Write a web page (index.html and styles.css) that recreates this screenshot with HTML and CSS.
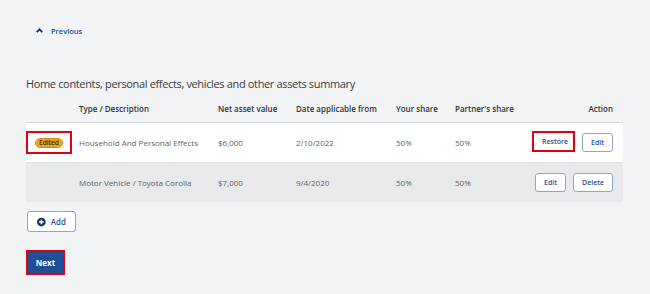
FILE: index.html
```html
<!DOCTYPE html>
<html lang="en">
<head>
    <meta charset="UTF-8">
    <meta name="viewport" content="width=device-width, initial-scale=1.0">
    <title>Assets Summary</title>
    <link rel="stylesheet" href="styles.css">
</head>
<body>

<div class="page">
    <a class="previous-link" href="#">
        <svg class="chevron" width="7" height="5" viewBox="0 0 7 5"><path d="M0.8 4.2 L3.5 1.4 L6.2 4.2" fill="none" stroke="#17365f" stroke-width="1.8"/></svg>
        Previous
    </a>

    <h2 class="summary-title">Home contents, personal effects, vehicles and other assets summary</h2>

    <table class="assets-table">
        <thead>
            <tr>
                <th class="col-flag"></th>
                <th class="col-type">Type / Description</th>
                <th class="col-value">Net asset value</th>
                <th class="col-date">Date applicable from</th>
                <th class="col-share">Your share</th>
                <th class="col-partner">Partner's share</th>
                <th class="col-action">Action</th>
            </tr>
        </thead>
        <tbody>
            <tr class="row-edited">
                <td class="col-flag"><span class="flag-box"><span class="badge">Edited</span></span></td>
                <td>Household And Personal Effects</td>
                <td>$6,000</td>
                <td>2/10/2022</td>
                <td>50%</td>
                <td>50%</td>
                <td class="col-action">
                    <div class="actions">
                        <button class="btn btn-highlight">Restore</button>
                        <button class="btn">Edit</button>
                    </div>
                </td>
            </tr>
            <tr class="row-plain">
                <td class="col-flag"></td>
                <td>Motor Vehicle / Toyota Corolla</td>
                <td>$7,000</td>
                <td>9/4/2020</td>
                <td>50%</td>
                <td>50%</td>
                <td class="col-action">
                    <div class="actions">
                        <button class="btn">Edit</button>
                        <button class="btn">Delete</button>
                    </div>
                </td>
            </tr>
        </tbody>
    </table>

    <button class="btn add-btn">
        <svg width="10" height="10" viewBox="0 0 10 10"><circle cx="5" cy="5" r="5" fill="#17365f"/><path d="M5 2.4 V7.6 M2.4 5 H7.6" stroke="#fff" stroke-width="1.6"/></svg>
        Add
    </button>

    <div class="next-row">
        <button class="next-btn">Next</button>
    </div>
</div>

</body>
</html>
```

FILE: styles.css
```css
body {
    margin: 0;
    background-color: #f2f3f5;
    font-family: "Open Sans", Arial, sans-serif;
    color: #4a4a4a;
}

.page {
    padding: 16px 27px 0 26px;
}

.previous-link {
    display: inline-flex;
    align-items: center;
    gap: 8px;
    margin-left: 10px;
    font-size: 7.5px;
    font-weight: 600;
    color: #2a4f8f;
    text-decoration: none;
}

.summary-title {
    margin: 38px 0 0 0;
    font-size: 11px;
    font-weight: 400;
    letter-spacing: -0.35px;
    color: #3c3c3c;
}

.assets-table {
    width: 597px;
    margin-top: 4px;
    border-collapse: collapse;
    table-layout: fixed;
    font-size: 8px;
}

.assets-table th {
    height: 27px;
    text-align: left;
    font-weight: 600;
    color: #333;
    padding: 0;
    border-bottom: 1px solid #d9dadd;
}

.assets-table td {
    height: 39px;
    padding: 0;
    color: #5f5f5f;
    border-bottom: 1px solid #e0e1e4;
}

.col-flag { width: 53px; }
.col-type { width: 139px; }
.col-value { width: 78px; }
.col-date { width: 100px; }
.col-share { width: 59px; }
.col-partner { width: 73px; }

.assets-table .col-action {
    text-align: right;
    padding-right: 10px;
}

.row-edited {
    background-color: #fff;
}

.row-plain {
    background-color: #e8e9eb;
}

.row-plain td {
    border-bottom: none;
}

.actions {
    display: flex;
    justify-content: flex-end;
    align-items: center;
    gap: 7px;
}

.flag-box {
    display: flex;
    align-items: center;
    justify-content: center;
    box-sizing: border-box;
    width: 46px;
    height: 23px;
    border: 2px solid #e0000f;
}

.badge {
    display: inline-block;
    background-color: #f5a01a;
    border: 1px solid #e08a0a;
    border-radius: 5px;
    padding: 0 3px;
    font-size: 6.5px;
    font-weight: 600;
    line-height: 8px;
    color: #2b2b2b;
}

.btn {
    font-family: "Open Sans", Arial, sans-serif;
    font-size: 7px;
    font-weight: 600;
    color: #2a4f8f;
    background-color: #fff;
    border: 1px solid #8ea6cc;
    border-radius: 3px;
    height: 19px;
    padding: 0 8px;
}

.btn-highlight {
    box-sizing: border-box;
    width: 43px;
    height: 21px;
    border: 2px solid #e0000f;
    border-radius: 0;
    margin-top: -2px;
}

.add-btn {
    display: flex;
    align-items: center;
    gap: 5px;
    margin: 9px 0 0 1px;
    height: 21px;
    width: 49px;
    padding: 0 9px;
    font-size: 8px;
}

.next-row {
    margin-top: 18px;
}

.next-btn {
    display: block;
    box-sizing: border-box;
    font-family: "Open Sans", Arial, sans-serif;
    background-color: #1f4e96;
    color: #fff;
    font-size: 8px;
    font-weight: 700;
    border: 2px solid #e0000f;
    width: 39px;
    height: 25px;
    padding: 0;
}
```
